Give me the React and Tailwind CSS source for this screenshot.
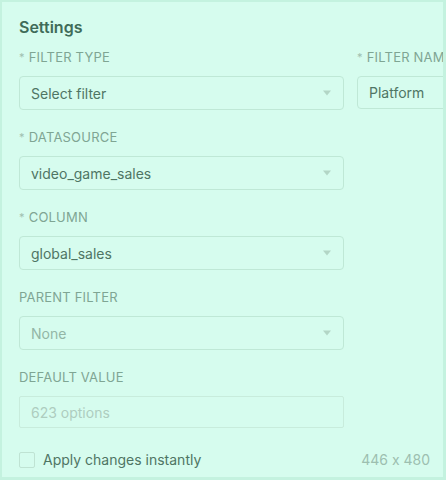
import React from "react";

function Caret() {
  return (
    <svg width="10" height="6" viewBox="0 0 10 6" className="shrink-0">
      <path d="M1 0.5 L9 0.5 L5 5.5 Z" fill="#b3d6c6" />
    </svg>
  );
}

function Label({ children, req }) {
  return (
    <div className="h-[20px] flex items-center text-[13px] tracking-[0.2px] text-[#7fa593] leading-none whitespace-nowrap">
      {req && <span className="text-[#9fbfb0] mr-[4px] text-[11px]">*</span>}
      {children}
    </div>
  );
}

function Select({ value, muted }) {
  return (
    <div className="mt-[9px] h-[34px] w-[325px] rounded-[4px] border border-[#bfe8d6] flex items-center justify-between pl-[11px] pr-[11px]">
      <span className={`text-[14px] ${muted ? "text-[#93b6a6]" : "text-[#4f7564]"}`}>{value}</span>
      <Caret />
    </div>
  );
}

export default function App() {
  return (
    <div
      className="w-[446px] h-[480px] overflow-hidden bg-[#c4f2df] pt-[2px] pl-[2px] pb-[3px] pr-[3px] [font-feature-settings:'calt'_0]"
      style={{ fontFamily: "Inter, 'Noto Sans', sans-serif" }}
    >
      <div className="h-full w-full bg-[#d6fcee] pl-[17px] pt-[15px] relative overflow-hidden">
        <div className="text-[16px] font-semibold text-[#3f6b58] leading-[20px]">Settings</div>
        <div className="flex gap-[13px] mt-[10px] w-[600px]">
          <div className="flex flex-col">
            <Label req>FILTER TYPE</Label>
            <Select value="Select filter" />
          </div>
          <div className="flex flex-col">
            <Label req>FILTER NAME</Label>
            <div className="mt-[9px] h-[33px] w-[200px] rounded-[4px] border border-[#bfe8d6] flex items-center pl-[11px]">
              <span className="text-[14px] text-[#4f7564]">Platform</span>
            </div>
          </div>
        </div>
        <div className="mt-[17px] flex flex-col">
          <Label req>DATASOURCE</Label>
          <Select value="video_game_sales" />
        </div>
        <div className="mt-[17px] flex flex-col">
          <Label req>COLUMN</Label>
          <Select value="global_sales" />
        </div>
        <div className="mt-[17px] flex flex-col">
          <Label>PARENT FILTER</Label>
          <Select value="None" muted />
        </div>
        <div className="mt-[17px] flex flex-col">
          <Label>DEFAULT VALUE</Label>
          <div className="mt-[9px] h-[32px] w-[325px] rounded-[2px] border border-[#c8ecdc] flex items-center pl-[11px]">
            <span className="text-[14px] text-[#aecdbf]">623 options</span>
          </div>
        </div>
        <div className="mt-[21px] flex items-center justify-between pr-[13px]">
          <div className="flex items-center gap-[8px]">
            <div className="w-[16px] h-[16px] rounded-[2px] border border-[#bfe3d3]" />
            <span className="text-[14px] text-[#4f7564]">Apply changes instantly</span>
          </div>
          <span className="text-[14px] text-[#9dbfb0]">446 x 480</span>
        </div>
      </div>
    </div>
  );
}
